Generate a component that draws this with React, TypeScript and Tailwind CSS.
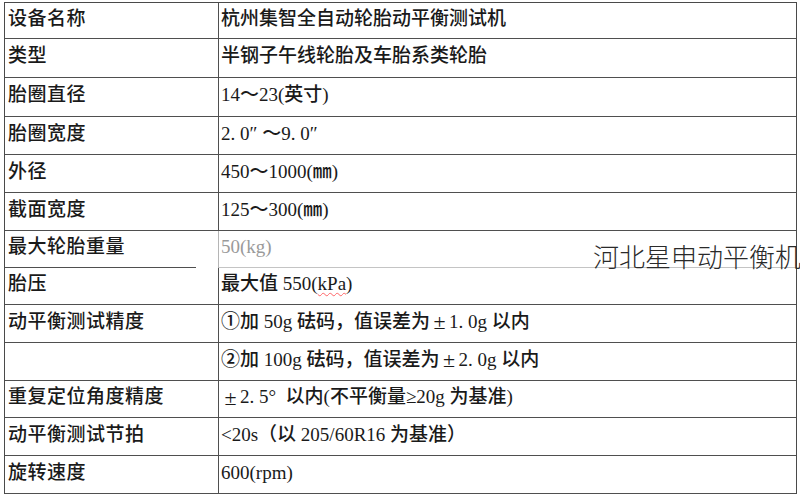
const Dot = () => <span className="inline-block w-[9.5px]">.</span>;
const PM = () => (
  <span className="inline-block w-[19px] text-center text-[22px] leading-none">±</span>
);

const ROWS: { label: string; value: React.ReactNode; h: number }[] = [
  { label: "设备名称", value: "杭州集智全自动轮胎动平衡测试机", h: 36 },
  { label: "类型", value: "半钢子午线轮胎及车胎系类轮胎", h: 39 },
  { label: "胎圈直径", value: "14～23(英寸)", h: 39 },
  {
    label: "胎圈宽度",
    value: (
      <>
        2<Dot />0″ ～9<Dot />0″
      </>
    ),
    h: 38,
  },
  { label: "外径", value: "450～1000(㎜)", h: 38 },
  { label: "截面宽度", value: "125～300(㎜)", h: 38 },
  { label: "最大轮胎重量", value: "50(kg)", h: 37 },
  {
    label: "胎压",
    value: (
      <>
        最大值 550(
        <span className="underline decoration-wavy decoration-red-400 decoration-1 underline-offset-2">
          kPa
        </span>
        )
      </>
    ),
    h: 37,
  },
  {
    label: "动平衡测试精度",
    value: (
      <>
        ①加 50g 砝码，值误差为<PM />1<Dot />0g 以内
      </>
    ),
    h: 38,
  },
  {
    label: "",
    value: (
      <>
        ②加 100g 砝码，值误差为<PM />2<Dot />0g 以内
      </>
    ),
    h: 38,
  },
  {
    label: "重复定位角度精度",
    value: (
      <>
        <PM />2<Dot />5°&nbsp; 以内(不平衡量≥20g 为基准)
      </>
    ),
    h: 37,
  },
  { label: "动平衡测试节拍", value: "<20s（以 205/60R16 为基准）", h: 38 },
  { label: "旋转速度", value: "600(rpm)", h: 38 },
];

export default function App() {
  return (
    <div className="relative h-[496px] w-[800px] overflow-hidden bg-white font-['Liberation_Serif','Noto_Sans_CJK_SC',serif] text-[19px] text-[#1a1a1a]">
      <div className="ml-[4px] mt-[2px] w-[793px] border-x border-t border-[#4a4a4a]">
        {ROWS.map((row, i) => {
          const special = i === 6;
          return (
            <div
              key={i}
              className={`grid grid-cols-[213px_1fr] ${special ? "" : "border-b border-[#4f4f4f]"}`}
              style={{ height: row.h }}
            >
              <div className="flex flex-col">
                <div className="flex flex-1 items-center pb-[3px] pl-[3px] font-medium tracking-[0.5px]">
                  {row.label}
                </div>
                {special && <div className="h-px w-[191px] bg-[#4f4f4f]" />}
              </div>
              <div
                className={`flex flex-col border-l ${special ? "border-[#b5b5b5]" : "border-[#4f4f4f]"}`}
              >
                <div
                  className={`flex flex-1 items-center whitespace-pre pb-[3px] pl-[2px] font-medium ${special ? "font-normal text-[#9a9a9a]" : ""}`}
                >
                  {row.value}
                </div>
                {special && <div className="h-px w-full bg-[#c4c4c4]" />}
              </div>
            </div>
          );
        })}
      </div>
      <div className="absolute left-[593px] top-[236px] whitespace-nowrap font-['Noto_Sans_CJK_SC',sans-serif] text-[26px] font-light text-[#2a2a2a]">
        河北星申动平衡机
      </div>
    </div>
  );
}
